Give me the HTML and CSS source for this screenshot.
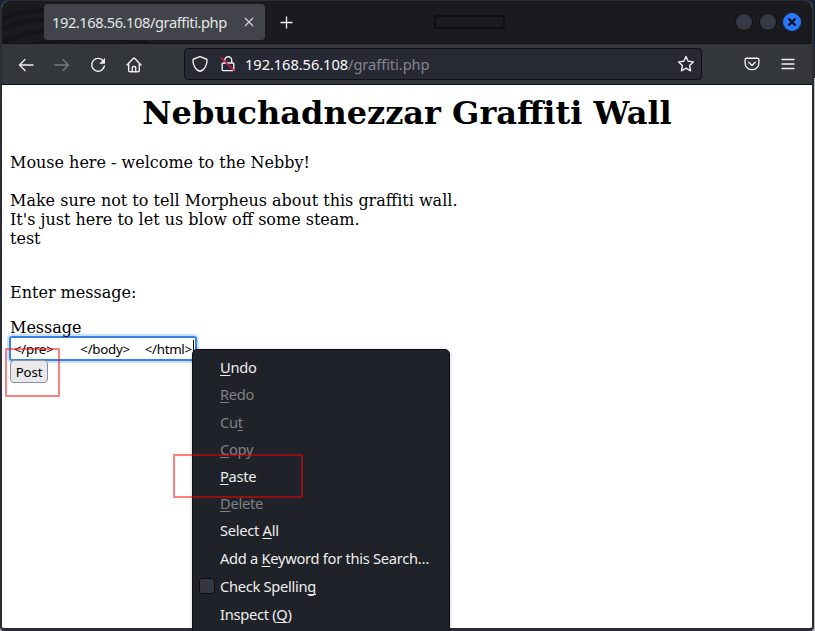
FILE: index.html
```
<!DOCTYPE html>
<html lang="en">
<head>
<meta charset="utf-8">
<title>192.168.56.108/graffiti.php</title>
<link rel="stylesheet" href="styles.css">
</head>
<body>
<div class="window">
  <header class="titlebar">
    <svg class="texture" width="200" height="42" viewBox="0 0 200 42" fill="none" stroke="#141519" stroke-width="5"><path d="M-2 19C15 11 28 9 50 10M-2 29C18 21 30 19 50 18M-2 43C20 32 38 29 55 29M36 43C55 36 65 40 80 38C100 36 130 38 146 43"/></svg>
    <div class="tab"><span class="tab-title">192.168.56.108/graffiti.php</span>
      <svg width="10" height="10" viewBox="0 0 10 10" fill="none" stroke="#d8d8da" stroke-width="1.1"><path d="M1 1l8 8M9 1l-8 8"/></svg>
    </div>
    <svg class="plus" width="13" height="13" viewBox="0 0 13 13" stroke="#f0f0f0" stroke-width="1.3"><path d="M6.5 .5v12M.5 6.5h12"/></svg>
    <div class="redacted"></div>
    <div class="controls">
      <i class="dot"></i><i class="dot"></i>
      <i class="dot close"><svg width="10" height="10" viewBox="0 0 10 10" stroke="#0a0f1c" stroke-width="2.3"><path d="M1.5 1.5l7 7M8.5 1.5l-7 7"/></svg></i>
    </div>
  </header>
  <nav class="toolbar">
    <div class="nav-icons">
      <svg width="16" height="16" viewBox="0 0 16 16"><path d="M15 8H1.7M7 2.5L1.5 8L7 13.5"/></svg>
      <svg class="dim" width="16" height="16" viewBox="0 0 16 16"><path d="M1 8h13.3M9 2.5L14.5 8L9 13.5"/></svg>
      <svg width="16" height="16" viewBox="0 0 16 16"><path d="M13.4 4.2A6.4 6.4 0 1 0 14.4 9"/><path class="solid" d="M15 1v5.2a.5.5 0 0 1-.5.5H9.3z"/></svg>
      <svg width="16" height="16" viewBox="0 0 16 16"><path d="M1 8L7.2 1.5q.8-.8 1.6 0L15 8M2.7 6.5v7q0 1.3 1.3 1.3h8q1.3 0 1.3-1.3v-7M6.3 14.5v-4q0-1 1-1h1.4q1 0 1 1v4"/></svg>
    </div>
    <div class="urlbar">
      <svg width="16" height="18" viewBox="0 0 16 18"><path d="M8 1.6L14.2 4Q15 4.3 15 5.2C15 11 12 15.3 8 16.3C4 15.3 1 11 1 5.2Q1 4.3 1.8 4z"/></svg>
      <svg class="lock" width="16" height="18" viewBox="0 0 16 18"><path d="M4.7 8V5.3a3.5 3.5 0 0 1 7 0V8M3.2 8h9.6q1 0 1 1v5.6q0 1-1 1H3.2q-1 0-1-1V9q0-1 1-1z"/><path class="slash" d="M1 2.5L14.5 16"/></svg>
      <div class="url">192.168.56.108<span>/graffiti.php</span></div>
      <svg class="star" width="18" height="18" viewBox="0 0 18 18"><path d="M9 1.5l2.2 4.7 5.2.7-3.8 3.6 1 5.3L9 13.2l-4.6 2.6 1-5.3-3.8-3.6 5.2-.7z"/></svg>
    </div>
    <div class="right-icons">
      <svg width="16" height="16" viewBox="0 0 16 16"><path d="M2.5 2.3h11q1.4 0 1.4 1.4v3.2c0 9-13.8 9-13.8 0V3.7q0-1.4 1.4-1.4zM4.7 6.3L8 9.4l3.3-3.1"/></svg>
      <svg width="14" height="16" viewBox="0 0 14 16"><path d="M1 3.5h12M1 8h12M1 12.5h12"/></svg>
    </div>
  </nav>
  <main class="page">
    <h1>Nebuchadnezzar Graffiti Wall</h1>
    <p class="wall">Mouse here - welcome to the Nebby!<br><br>Make sure not to tell Morpheus about this graffiti wall.<br>It's just here to let us blow off some steam.<br>test</p>
    <p class="prompt">Enter message:</p>
    <div class="form">
      <div>Message</div>
      <div class="field"><span>&lt;/pre&gt;</span><span>&lt;/body&gt;</span><span>&lt;/html&gt;</span><i class="caret"></i></div>
      <button>Post</button>
    </div>
  </main>
</div>
<div class="menu">
  <div class="item"><u>U</u>ndo</div>
  <div class="item off"><u>R</u>edo</div>
  <hr>
  <div class="item off">Cu<u>t</u></div>
  <div class="item off"><u>C</u>opy</div>
  <div class="item"><u>P</u>aste</div>
  <div class="item off"><u>D</u>elete</div>
  <div class="item">Select <u>A</u>ll</div>
  <hr>
  <div class="item">Add a <u>K</u>eyword for this Search…</div>
  <hr>
  <div class="item"><i class="check"></i>Check Spellin<u>g</u></div>
  <hr>
  <div class="item">Inspect (<u>Q</u>)</div>
</div>
<div class="mark mark-post"></div>
<div class="mark mark-paste"></div>
</body>
</html>
```
FILE: styles.css
```
* { box-sizing: border-box; }
html { height: 100%; }
body {
  margin: 0;
  height: 631px;
  overflow: hidden;
  position: relative;
  padding: 1px 2px 0;
  background: linear-gradient(#142235 0 48px, #22232b 48px 78px, #b9b9bb 78px);
  font-family: "Noto Sans", sans-serif;
}
.window {
  width: 812px;
  height: 630px;
  margin-left: -1px;
  border: solid #2b2b36;
  border-width: 0 1px 3px;
  border-radius: 7px 7px 4px 4px;
  outline: 1px solid #2c2d35;
  background: #fff;
  overflow: hidden;
}
.titlebar {
  height: 43px;
  background: #1a1b1f;
  border-bottom: 1px solid #101114;
  display: flex;
  align-items: center;
  position: relative;
}
.texture { position: absolute; left: 0; top: 0; }
.tab {
  position: relative;
  width: 221px;
  height: 36px;
  margin: 0 0 0 42px;
  padding: 0 11px 0 8px;
  border-radius: 4px;
  background: #42444b;
  display: flex;
  align-items: center;
  justify-content: space-between;
}
.tab-title { font-size: 14.67px; letter-spacing: -.43px; color: #e4e4e5; white-space: nowrap; }
.plus { margin-left: 15px; }
.redacted { width: 71px; height: 14px; margin-left: 141px; border: 2px solid #0e0f12; border-radius: 2px; }
.controls { display: flex; gap: 6px; margin-left: auto; margin-right: 11px; }
.dot { width: 18px; height: 18px; border-radius: 50%; border: 1px solid #0c0d10; background: #363a46; display: flex; align-items: center; justify-content: center; }
.close { background: #2777ff; border-color: #2777ff; }
.toolbar {
  height: 41px;
  background: #33363b;
  border-bottom: 1px solid #0f1012;
  display: flex;
  align-items: center;
}
.toolbar svg { fill: none; stroke: #eeeeec; stroke-width: 1.4; stroke-linecap: round; stroke-linejoin: round; flex: none; }
.toolbar .dim { stroke: #77797d; }
.toolbar .solid { fill: #eeeeec; stroke: none; }
.toolbar .slash { stroke: #d31645; stroke-width: 1.6; }
.nav-icons { display: flex; gap: 20px; margin-left: 16px; padding-top: 1px; width: 166px; flex: none; }
.urlbar {
  width: 518px;
  height: 32px;
  border: 1px solid #101114;
  border-radius: 4px;
  background: #272935;
  display: flex;
  align-items: center;
  padding: 0 6px 0 7px;
}
.lock { margin-left: 12px; }
.url { margin-left: 9px; color: #fbfbfb; font-size: 14.67px; letter-spacing: -.07px; white-space: nowrap; }
.url span { color: #85868c; }
.star { margin-left: auto; }
.right-icons { display: flex; gap: 21px; margin-left: 42px; }
.page { padding: 9px 8px 8px; font: 16px/19px "DejaVu Serif", serif; color: #000; }
h1 { margin: 0; font-size: 32px; line-height: 38px; text-align: center; }
.wall { margin: 21px 0 0; }
.prompt { margin: 35px 0 0; }
.form { margin-top: 16px; }
.form > div:first-child { position: relative; z-index: 1; }
.field {
  display: flex;
  width: 188px;
  height: 25px;
  margin: -1px 0 -1px -1px;
  border: 2px solid #3584e4;
  border-radius: 3px;
  box-shadow: 0 0 0 2px #c9e2ff;
  align-items: center;
  padding-left: 3px;
  font: 13.33px/18px "Noto Sans", sans-serif;
  letter-spacing: -.3px;
  white-space: pre;
}
.field span:nth-child(2) { margin-left: 27px; }
.field span:nth-child(3) { margin-left: 15px; }
.caret { width: 1px; height: 18px; background: #000; margin-left: 1px; }
button {
  display: block;
  position: relative;
  width: 38px;
  height: 23px;
  padding: 0;
  border: 1px solid #8f8f9d;
  border-radius: 4px;
  background: #e9e9ed;
  color: #000;
  font: 13.33px/18px "Noto Sans", sans-serif;
  letter-spacing: -.2px;
}
.menu {
  position: absolute;
  left: 192px;
  top: 349px;
  width: 258px;
  height: 290px;
  padding: 4px 0 0;
  border: 1px solid #0d0e12;
  border-radius: 5px 5px 0 0;
  background: #20222a;
  box-shadow: 0 1px 4px #0003;
}
.item {
  height: 27px;
  padding-left: 27px;
  color: #eeeeec;
  font-size: 14.67px;
  letter-spacing: -.28px;
  line-height: 27px;
  white-space: nowrap;
  position: relative;
}
.item u { text-underline-offset: 2px; text-decoration-thickness: 1px; text-decoration-skip-ink: none; }
.off { color: #808183; }
.menu hr { margin: 0; border: 0; height: 1px; background: #1c1d25; }
.check { position: absolute; left: 6px; top: 5px; width: 16px; height: 16px; border: 1px solid #0c0d11; border-radius: 3px; background: #343742; }
.mark { position: absolute; border: 2px solid #ff000080; border-radius: 1px; }
.mark-post { left: 5px; top: 348px; width: 55px; height: 49px; }
.mark-paste { left: 173px; top: 454px; width: 130px; height: 44px; }
```
